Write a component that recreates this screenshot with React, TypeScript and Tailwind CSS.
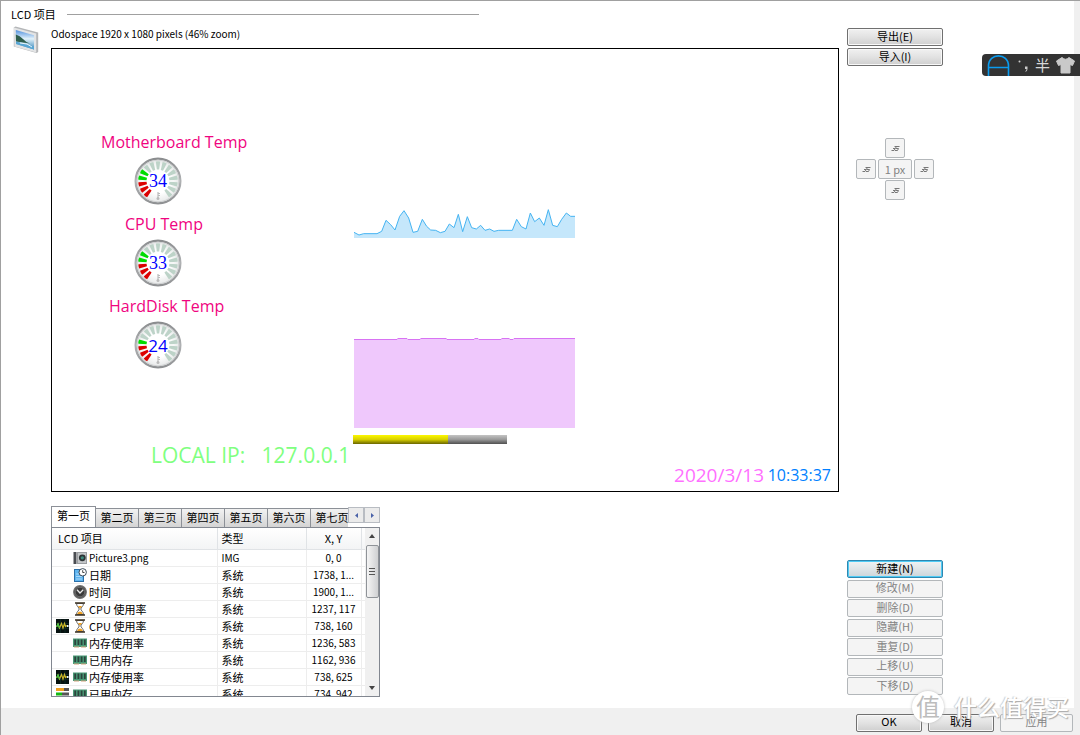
import { useState } from "react";
import type { ReactNode } from "react";

const TABS = ["第一页", "第二页", "第三页", "第四页", "第五页", "第六页", "第七页"];

type IconName = "picture" | "date" | "clock" | "hourglass" | "memory";
type Marker = "graph" | "bars";

interface Item {
  icon: IconName;
  marker?: Marker;
  name: string;
  type: string;
  pos: string;
}

const ITEMS: Item[] = [
  { icon: "picture", name: "Picture3.png", type: "IMG", pos: "0, 0" },
  { icon: "date", name: "日期", type: "系统", pos: "1738, 1..." },
  { icon: "clock", name: "时间", type: "系统", pos: "1900, 1..." },
  { icon: "hourglass", name: "CPU 使用率", type: "系统", pos: "1237, 117" },
  { icon: "hourglass", marker: "graph", name: "CPU 使用率", type: "系统", pos: "738, 160" },
  { icon: "memory", name: "内存使用率", type: "系统", pos: "1236, 583" },
  { icon: "memory", name: "已用内存", type: "系统", pos: "1162, 936" },
  { icon: "memory", marker: "graph", name: "内存使用率", type: "系统", pos: "738, 625" },
  { icon: "memory", marker: "bars", name: "已用内存", type: "系统", pos: "734, 942" },
];

const ACTIONS = ["修改(M)", "删除(D)", "隐藏(H)", "重复(D)", "上移(U)", "下移(D)"];

const isLatin = (text: string) => /^[\x20-\x7e]+$/.test(text);
const textSize = (text: string) => (isLatin(text) ? "text-[10px]" : "text-[11px]");

function ItemIcon({ name }: { name: IconName }) {
  const cls = "block h-[14px] w-[14px] shrink-0";
  if (name === "picture")
    return (
      <svg viewBox="0 0 14 14" className={cls} aria-hidden="true">
        <rect x="0.5" y="1" width="3" height="12" fill="#4a4d52" />
        <rect x="4" y="1" width="10" height="12" fill="#9a9da0" />
        <rect x="5" y="2" width="8" height="10" fill="#c3c6c8" />
        <circle cx="9.3" cy="6.8" r="3.4" fill="#2d3436" />
        <circle cx="9.3" cy="6.8" r="1.6" fill="#3d8a7c" />
      </svg>
    );
  if (name === "date")
    return (
      <svg viewBox="0 0 14 14" className={cls} aria-hidden="true">
        <rect x="1.5" y="1.5" width="9" height="12" fill="#5fb4ee" stroke="#2b6fa8" />
        <path d="M3 6h3M3 8.5h6M3 11h6" stroke="#a9d9fb" strokeWidth="1.2" />
        <circle cx="9.7" cy="4.3" r="3.7" fill="#fff" stroke="#3a4a58" />
        <path d="M9.7 2.2v2.3h1.8" stroke="#333" fill="none" strokeWidth="0.9" />
      </svg>
    );
  if (name === "clock")
    return (
      <svg viewBox="0 0 14 14" className={cls} aria-hidden="true">
        <circle cx="7" cy="7" r="6.3" fill="#4a4a4a" stroke="#6d6d6d" strokeWidth="1.2" />
        <circle cx="7" cy="7" r="4.8" fill="#3a3a3a" stroke="#8a8a8a" strokeWidth="0.6" />
        <path d="M4 4.800 7 8l3.200-3.200" stroke="#e8e8e8" strokeWidth="1.3" fill="none" />
      </svg>
    );
  if (name === "hourglass")
    return (
      <svg viewBox="0 0 14 14" className={cls} aria-hidden="true">
        <path d="M3.5 1.5c0 3 2.7 4 2.7 5.5S3.5 9.500 3.500 12.500h7c0-3-2.700-4-2.700-5.500s2.700-2.500 2.700-5.500z" fill="#fff" stroke="#666" />
        <path d="M5 4h4L7 6.800zM4.300 12c.4-2 2-2.600 2.700-2.600s2.300.6 2.700 2.600z" fill="#f0a020" />
        <path d="M2 1h10M2 13h10" stroke="#3b3020" strokeWidth="1.6" />
      </svg>
    );
  return (
    <svg viewBox="0 0 14 14" className={cls} aria-hidden="true">
      <rect x="0" y="2.500" width="14" height="8.500" fill="#4a9a76" />
      <path d="M2.200 3.500v5.500M5.400 3.500v5.500M8.600 3.500v5.500M11.800 3.500v5.500" stroke="#2b443c" strokeWidth="1.800" />
      <path d="M1 11h5M8 11h5" stroke="#d3a27c" />
    </svg>
  );
}

function MarkerIcon({ name }: { name?: Marker }) {
  const cls = "block h-[14px] w-[13px] shrink-0";
  if (name === "graph")
    return (
      <svg viewBox="0 0 13 14" className={cls} aria-hidden="true">
        <rect width="13" height="14" fill="#061210" />
        <path d="M0 4.500h13M0 9.500h13M4.500 0v14M9 0v14" stroke="#12352e" strokeWidth="0.6" />
        <path d="M0.500 8 2 5 3.500 9 5.500 4.500 7 9 8.500 4.500 9.500 7.500 11 6.500" stroke="#c9b82a" strokeWidth="1.200" fill="none" />
        <path d="M0.500 8 2 5 3.500 9" stroke="#3fc04a" strokeWidth="1.200" fill="none" />
        <rect x="11" y="6" width="1.500" height="2" fill="#dff5ff" />
      </svg>
    );
  if (name === "bars")
    return (
      <svg viewBox="0 0 13 14" className={cls} aria-hidden="true">
        <rect y="1" width="8" height="3" fill="#f0a020" />
        <rect x="8" y="1" width="5" height="3" fill="#555" />
        <rect y="5.500" width="6" height="3" fill="#15b815" />
        <rect x="6" y="5.500" width="7" height="3" fill="#555" />
        <rect y="10" width="9" height="3" fill="#d02020" />
      </svg>
    );
  return <span className={cls} />;
}

function Gauge({ value, red, green, serif }: { value: number; red: number; green: number; serif: boolean }) {
  return (
    <div className="relative mx-auto h-12 w-12">
      <svg viewBox="-24 -24 48 48" className="block h-12 w-12" aria-hidden="true">
        <defs>
          <linearGradient id={`ring${value}`} x1="0" y1="0" x2="0" y2="1">
            <stop offset="0" stopColor="#8b8d8f" />
            <stop offset="0.5" stopColor="#b0b2b4" />
            <stop offset="1" stopColor="#8f9193" />
          </linearGradient>
          <radialGradient id={`face${value}`}>
            <stop offset="0.55" stopColor="#ffffff" />
            <stop offset="1" stopColor="#e4e6e6" />
          </radialGradient>
        </defs>
        <circle r="22.400" fill={`url(#face${value})`} stroke={`url(#ring${value})`} strokeWidth="2.200" />
        <circle r="20.800" fill="none" stroke="#d0d2d3" strokeWidth="1" />
        {Array.from({ length: 15 }, (_, i) => (
          <path
            key={i}
            d="M-2.200-19.500Q0-20.200 2.200-19.500L1.200-11.400H-1.200Z"
            transform={`rotate(${220 + i * 20})`}
            fill={i < red ? "#dc0000" : i < red + green ? "#00dc00" : "#bdd3c8"}
          />
        ))}
        <path d="M0 11v6M0 12.500h2M0 14.500h2" stroke="#bbb" strokeWidth="1.200" />
        <circle cy="17.500" r="1.500" fill="#bbb" />
      </svg>
      <span
        className={
          serif
            ? "absolute inset-0 flex items-center justify-center font-['Liberation_Serif',serif] text-[18px] leading-none text-[#0000ff]"
            : "absolute inset-0 flex items-center justify-center font-['Open_Sans','Noto_Sans',sans-serif] text-[17px] leading-none text-[#0000ff]"
        }
      >
        {value}
      </span>
    </div>
  );
}

function PushButton({ children, primary, disabled }: { children: ReactNode; primary?: boolean; disabled?: boolean }) {
  const base = "flex h-[18px] w-full shrink-0 items-center justify-center rounded-[2px] border pb-0.5 text-[11px] leading-none ";
  if (disabled)
    return (
      <button type="button" disabled className={base + "border-[#b3b7ba] bg-[#f4f4f4] text-[#838383]"}>
        {children}
      </button>
    );
  if (primary)
    return (
      <button
        type="button"
        className={base + "border-[#2f87b0] bg-linear-to-b from-[#f0f3f4] via-[#dfe5e8] to-[#ccd5da] text-black shadow-[inset_0_0_0_1px_#4fcbf5]"}
      >
        {children}
      </button>
    );
  return (
    <button
      type="button"
      className={base + "border-[#707070] bg-linear-to-b from-[#f1f1f1] via-[#e2e2e2] to-[#cfcfcf] text-black shadow-[inset_0_0_0_1px_#f8f8f8]"}
    >
      {children}
    </button>
  );
}

function NudgeButton({ label }: { label: string }) {
  return (
    <button
      type="button"
      disabled
      aria-label={label}
      className="flex h-5 w-5 items-center justify-center rounded-[2px] border border-[#b3b7ba] bg-[#f4f4f4]"
    >
      <svg viewBox="0 0 9 7" className="h-[7px] w-[9px]" aria-hidden="true">
        <path d="M0.500 5.500H3L5.500 1.500M2 3.500H4M3.500 1.500H8.500M5 3.500H7.500L6.500 5.500H4" stroke="#777" strokeWidth="1" fill="none" />
      </svg>
    </button>
  );
}

function LcdCanvas() {
  return (
    <div className="relative aspect-[788/444] w-full overflow-hidden border border-black bg-white font-['Open_Sans','Noto_Sans',sans-serif]">
      <p className="absolute top-[82px] left-[49px] text-[16px] leading-[22px] whitespace-nowrap text-[#f0047f]">Motherboard Temp</p>
      <p className="absolute top-[164px] left-[73px] text-[16px] leading-[22px] whitespace-nowrap text-[#f0047f]">CPU Temp</p>
      <p className="absolute top-[246px] left-[57px] text-[16px] leading-[22px] whitespace-nowrap text-[#f0047f]">HardDisk Temp</p>
      <div className="absolute top-[108px] left-[82px] flex flex-col gap-[34px]">
        <Gauge value={34} red={3} green={2} serif />
        <Gauge value={33} red={3} green={2} serif />
        <Gauge value={24} red={3} green={1} serif={false} />
      </div>

      <svg viewBox="27 0 663 114" className="absolute top-[151px] left-[302px] h-[38px] w-[221px]" aria-hidden="true">
        <path
          d="M27 97 42 105 56 101 96 101 110 94 123 61 137 74 150 90 164 49 177 32 191 54 204 97 218 94 232 58 245 79 257 90 272 91 286 98 300 94 313 72 327 83 340 43 353 95 367 50 380 83 394 87 407 76 420 91 434 87 447 94 461 91 502 91 515 58 529 80 543 87 556 39 569 65 583 54 597 76 610 29 623 76 637 80 650 58 664 39 677 49 690 49V114H27Z"
          fill="#c5e7fb"
        />
        <path
          d="M27 97 42 105 56 101 96 101 110 94 123 61 137 74 150 90 164 49 177 32 191 54 204 97 218 94 232 58 245 79 257 90 272 91 286 98 300 94 313 72 327 83 340 43 353 95 367 50 380 83 394 87 407 76 420 91 434 87 447 94 461 91 502 91 515 58 529 80 543 87 556 39 569 65 583 54 597 76 610 29 623 76 637 80 650 58 664 39 677 49 690 49"
          fill="none"
          stroke="#45b4f2"
          strokeWidth="3"
        />
      </svg>

      <svg viewBox="0 0 221 90" className="absolute top-[289px] left-[302px] h-[90px] w-[221px]" aria-hidden="true">
        <path d="M0 1H43V0H53V1H66V0H93V1H120V0H124V1H147V0H156V1H160V0H221V90H0Z" fill="#efc8fc" />
        <path d="M0 1.500H43L44 .5H53L54 1.500H66L67 .5H92L93 1.500H120L121 .5H124L125 1.500H147L148 .5H155L156 1.500H159L160 .5H221" fill="none" stroke="#d873f3" />
      </svg>

      <div className="absolute top-[386px] left-[301px] flex h-[9px] w-[154px]">
        <div className="w-[62%] bg-linear-to-b from-[#fdf800] via-[#d8d000] to-[#6a6600]" />
        <div className="flex-1 bg-linear-to-b from-[#c4c4c4] via-[#999] to-[#505050]" />
      </div>

      <p className="absolute top-[391px] left-[99px] text-[21px] leading-[30px] whitespace-pre text-[#80ff80]">LOCAL IP:   127.0.0.1</p>
      <p className="absolute right-[74px] bottom-[3px] text-[19px] leading-[26px] whitespace-nowrap text-[#ff70ff]">2020/3/13</p>
      <p className="absolute right-[7px] bottom-[4px] text-[16px] leading-[24px] whitespace-nowrap text-[#0080ff]">10:33:37</p>
    </div>
  );
}

function ItemTable() {
  return (
    <div className="flex h-[170px] border border-[#828790] bg-white">
      <div className="min-w-0 flex-1 overflow-hidden">
        <table className="w-full table-fixed border-collapse text-left text-[11px] leading-[16px]">
          <colgroup>
            <col className="w-[165px]" />
            <col className="w-[89px]" />
            <col className="w-[55px]" />
            <col />
          </colgroup>
          <thead>
            <tr className="h-[21px] bg-linear-to-b from-white to-[#f3f4f5]">
              <th scope="col" className="border-r border-b border-[#e0e3e6] p-0 pl-1.5 font-normal">LCD 项目</th>
              <th scope="col" className="border-r border-b border-[#e0e3e6] p-0 pl-1 font-normal">类型</th>
              <th scope="col" className="border-r border-b border-[#e0e3e6] p-0 text-center font-normal">X, Y</th>
              <td className="border-b border-[#e0e3e6]" />
            </tr>
          </thead>
          <tbody>
            {ITEMS.map((item, i) => (
              <tr key={i} className="h-[17px]">
                <td className="border-r border-b border-[#ededed] p-0 pl-1">
                  <div className="flex h-4 items-center">
                    <MarkerIcon name={item.marker} />
                    <span className="w-1" />
                    <ItemIcon name={item.icon} />
                    <span className={`pl-0.5 whitespace-nowrap ${textSize(item.name)}`}>{item.name}</span>
                  </div>
                </td>
                <td className={`border-r border-b border-[#ededed] p-0 pl-1 ${textSize(item.type)}`}>{item.type}</td>
                <td className="border-r border-b border-[#ededed] p-0 text-center text-[10px] whitespace-nowrap">{item.pos}</td>
                <td className="border-b border-[#ededed] p-0" />
              </tr>
            ))}
          </tbody>
        </table>
      </div>
      <div className="flex w-[14px] shrink-0 flex-col items-center bg-[#f0f0f0] py-1.5" aria-hidden="true">
        <svg viewBox="0 0 6 4" className="h-1 w-1.5 shrink-0">
          <path d="M3 0 6 4H0z" fill="#444" />
        </svg>
        <div className="mt-[7px] flex h-[53px] w-[13px] shrink-0 flex-col items-center justify-center gap-0.5 rounded-[2px] border border-[#8f9398] bg-linear-to-r from-[#f5f5f5] to-[#cfd0d2]">
          <span className="h-px w-1.5 bg-[#555]" />
          <span className="h-px w-1.5 bg-[#555]" />
          <span className="h-px w-1.5 bg-[#555]" />
        </div>
        <svg viewBox="0 0 6 4" className="mt-auto h-1 w-1.5 shrink-0">
          <path d="M3 4 6 0H0z" fill="#444" />
        </svg>
      </div>
    </div>
  );
}

function InputMethodBar() {
  return (
    <div className="absolute top-[53px] right-0 flex h-[22px] w-[98px] items-center rounded-l-[4px] bg-[#333] pb-0.5 text-[#d8d8d8]">
      <svg viewBox="0 0 98 22" className="absolute inset-0 h-full w-full" aria-hidden="true">
        <path d="M6.500 22V12C6.500-1.500 26.500-1.500 26.500 12V22M6.500 13.500H26.500" fill="none" stroke="#0b9cf0" strokeWidth="1.600" />
        <circle cx="37.500" cy="7.500" r="1" fill="#ccc" />
        <path d="M43 12.500h2.500v2.500q0 2-2 3v-1q1-.6 1-2H43z" fill="#ccc" />
        <path d="M80 3.500Q83.500 7 87 3.500L92.500 7 90.500 11.500 88 10.500V19H79V10.500L76.500 11.500 74.500 7Z" fill="#c9c9c9" stroke="#c9c9c9" strokeLinejoin="round" />
      </svg>
      <span className="ml-[53px] text-[15px] leading-none">半</span>
    </div>
  );
}

function Watermark() {
  return (
    <div className="pointer-events-none absolute right-[11px] bottom-[11px] flex items-center gap-2.5">
      <span className="flex h-8 w-8 items-center justify-center rounded-full bg-white pb-0.5 text-[24px] leading-none text-[#bdbdbd] shadow-[0_0_3px_#bbb]">值</span>
      <span className="pb-0.5 text-[23px] leading-8 font-medium whitespace-nowrap text-white [text-shadow:1px_1px_1px_#aaa,-1px_0_1px_#ccc]">什么值得买</span>
    </div>
  );
}

export default function App() {
  const [tab, setTab] = useState(0);

  return (
    <div className="relative flex min-h-screen flex-col border-t border-l border-[#a0a0a0] bg-white font-['Noto_Sans_CJK_SC',sans-serif] text-[11px] leading-4 text-black">
      <main className="flex-1 border-r-[6px] border-[#f0f0f0] pt-[5px] pb-[11px]">
        <div className="flex h-4 items-center gap-[11px] pl-2.5">
          <h1 className="whitespace-nowrap">LCD 项目</h1>
          <span className="h-px w-[412px] bg-[#a0a0a0]" />
        </div>

        <div className="flex pt-1">
          <div className="w-[50px] shrink-0 pl-3">
            <svg viewBox="0 0 26 28" className="block h-7 w-[26px]" aria-hidden="true">
              <defs>
                <linearGradient id="sky" x1="0" y1="0" x2="0" y2="1">
                  <stop offset="0" stopColor="#4f8fdd" />
                  <stop offset="0.45" stopColor="#e2f2fb" />
                  <stop offset="1" stopColor="#3a86b8" />
                </linearGradient>
              </defs>
              <path d="M.8 1.500 2.500.5 25.200 6.500V26L23.500 27 .8 20.500Z" fill="#b4b6b8" />
              <path d="M.8 1.500 23.200 7.500V26.500L1.500 20.500Z" fill="#e3e4e5" />
              <path d="M2.800 4 21 9.200V23.500L3 18Z" fill="url(#sky)" />
              <path d="M2.800 8.500Q7 9.500 10 13T17 17.500L3 15.500Z" fill="#2f5f4e" />
              <path d="M3 15.500 14 18.500 21 20.500V23.500L3 18Z" fill="#58a6d4" />
              <path d="M7 17 14 18 19 21" stroke="#e8f6fc" fill="none" />
            </svg>
          </div>

          <div className="min-w-0 flex-1">
            <p className="mb-1.5 text-[10px] leading-4">Odospace 1920 x 1080 pixels (46% zoom)</p>
            <LcdCanvas />

            <div className="mt-[14px] w-[329px]">
              <div className="flex h-[21px] items-end">
                <div role="tablist" className="flex h-full min-w-0 flex-1 items-end overflow-hidden">
                  {TABS.map((label, i) => (
                    <button
                      key={label}
                      type="button"
                      role="tab"
                      aria-selected={i === tab}
                      onClick={() => setTab(i)}
                      className={
                        i === tab
                          ? "flex h-[21px] w-[45px] shrink-0 items-center justify-center border border-b-0 border-[#8c9097] bg-white pb-1"
                          : "-ml-px flex h-[19px] w-11 shrink-0 items-center justify-center border border-b-0 border-[#8c9097] bg-linear-to-b from-[#f2f2f2] to-[#d4d4d4] pb-0.5"
                      }
                    >
                      {label}
                    </button>
                  ))}
                </div>
                <div className="mb-1 flex">
                  <button type="button" aria-label="◂" className="flex h-4 w-4 items-center justify-center border border-[#b8bcc2] bg-[#ebebeb]">
                    <svg viewBox="0 0 3 5" className="h-[5px] w-[3px]" aria-hidden="true">
                      <path d="M3 0v5L0 2.500z" fill="#4a62a8" />
                    </svg>
                  </button>
                  <button type="button" aria-label="▸" className="flex h-4 w-4 items-center justify-center border border-[#b8bcc2] bg-[#ebebeb]">
                    <svg viewBox="0 0 3 5" className="h-[5px] w-[3px]" aria-hidden="true">
                      <path d="M0 0v5l3-2.500z" fill="#4a62a8" />
                    </svg>
                  </button>
                </div>
              </div>
              <ItemTable />
            </div>
          </div>

          <div className="mr-[131px] ml-2 flex w-24 shrink-0 flex-col pt-0.5">
            <div className="flex flex-col gap-0.5">
              <PushButton>导出(E)</PushButton>
              <PushButton>导入(I)</PushButton>
            </div>
            <div className="mt-[72px] flex flex-col items-center gap-px">
              <NudgeButton label="上" />
              <div className="flex gap-0.5">
                <NudgeButton label="左" />
                <button type="button" disabled className="h-5 w-[34px] rounded-[2px] border border-[#b3b7ba] bg-[#f4f4f4] text-[11px] leading-none text-[#838383]">
                  1 px
                </button>
                <NudgeButton label="右" />
              </div>
              <NudgeButton label="下" />
            </div>
            <div className="mt-auto mb-0.5 flex h-[135px] flex-col justify-between">
              <PushButton primary>新建(N)</PushButton>
              {ACTIONS.map((label) => (
                <PushButton key={label} disabled>
                  {label}
                </PushButton>
              ))}
            </div>
          </div>
        </div>
      </main>

      <footer className="flex h-[27px] shrink-0 items-center justify-end gap-1.5 bg-[#f0f0f0] pt-1 pr-[7px] pb-0.5">
        <div className="w-[66px]">
          <PushButton>OK</PushButton>
        </div>
        <div className="w-[66px]">
          <PushButton>取消</PushButton>
        </div>
        <div className="w-[73px]">
          <PushButton disabled>应用</PushButton>
        </div>
      </footer>

      <InputMethodBar />
      <Watermark />
    </div>
  );
}
